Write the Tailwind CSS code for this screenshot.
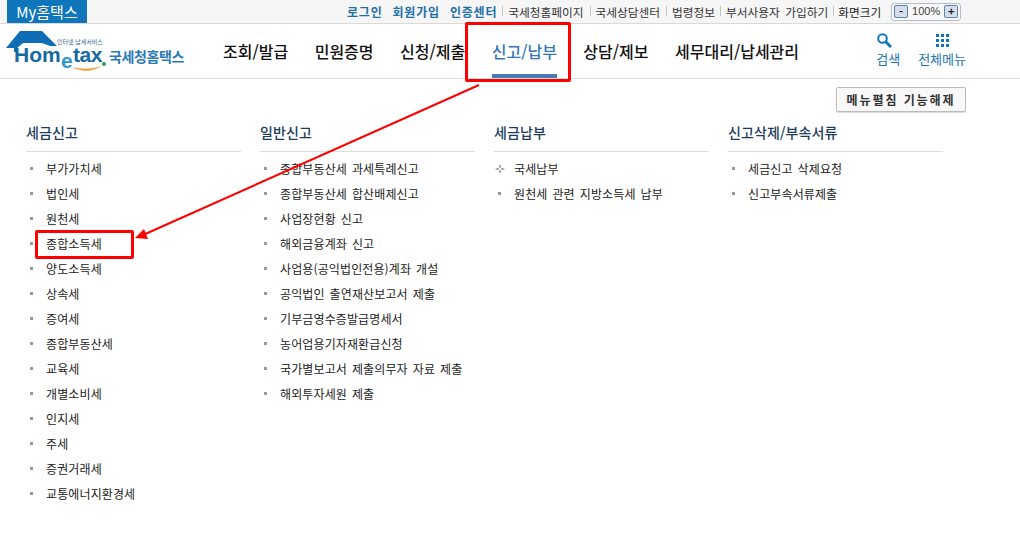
<!DOCTYPE html>
<html lang="ko">
<head>
  <meta charset="UTF-8" />
  <title>국세청 홈택스</title>
  <script src="https://cdn.jsdelivr.net/npm/@tailwindcss/browser@4"></script>
</head>
<body class="relative h-[534px] w-[1020px] overflow-hidden bg-white font-['Noto_Sans_CJK_KR','Noto_Sans',sans-serif] text-[12px] text-[#222]">

  <!-- top bar -->
  <div class="flex h-[24px] items-center border-b border-[#d9d9d9] bg-[#f6f6f6] pl-[7px]">
    <a class="flex h-[23px] w-[80px] items-center justify-center bg-[#0f76bb] text-[15px] leading-none text-white">My홈택스</a>
    <div class="ml-[260px] flex items-center gap-[10px] text-[12px] font-bold tracking-[.8px] text-[#1c6fa8]">
      <a>로그인</a><a>회원가입</a><a>인증센터</a>
    </div>
    <div class="ml-[5px] flex items-center text-[11.7px] text-[#333] [word-spacing:2px]">
      <span class="mr-[5px] h-[10px] w-px bg-[#c4c4c4]"></span><a>국세청홈페이지</a>
      <span class="ml-[6px] mr-[5px] h-[10px] w-px bg-[#c4c4c4]"></span><a>국세상담센터</a>
      <span class="ml-[6px] mr-[5px] h-[10px] w-px bg-[#c4c4c4]"></span><a>법령정보</a>
      <span class="ml-[5px] mr-[5px] h-[10px] w-px bg-[#c4c4c4]"></span><a>부서사용자 가입하기</a>
      <span class="ml-[5px] mr-[4px] h-[10px] w-px bg-[#c4c4c4]"></span><a class="text-[#222]">화면크기</a>
    </div>
    <div class="ml-[10px] flex h-[18px] w-[70px] items-center justify-between rounded-[3px] border border-[#b5bfcc] bg-[#f8f8f8] px-[2px]">
      <span class="flex h-[13px] w-[14px] items-center justify-center rounded-[2px] border border-[#5f82ad] bg-[#d5dfeb] text-[11px] font-bold leading-none text-[#223]">-</span>
      <span class="font-['Liberation_Sans',sans-serif] text-[11px] leading-none text-[#444]">100%</span>
      <span class="flex h-[13px] w-[14px] items-center justify-center rounded-[2px] border border-[#5f82ad] bg-[#d5dfeb] text-[11px] font-bold leading-none text-[#223]">+</span>
    </div>
  </div>

  <!-- header -->
  <header class="flex h-[55px] items-center border-b border-[#e0e0e0]">
    <div class="relative mt-[2px] h-[50px] w-[186px] shrink-0 self-start">
      <svg class="absolute left-0 top-0" width="110" height="50" viewBox="0 0 110 50">
        <path d="M6 22 L20 5 H42 L57 20 H50 L42 17 H23 L16 23 V26 H14 V22 Z" fill="#0f6db5"/>
        <path d="M72 41 Q87 49 102 40 Q87 45 72 41 Z" fill="#f0a030"/>
        <circle cx="104" cy="38" r="2" fill="#2ca04a"/>
      </svg>
      <span class="absolute left-[14px] top-[21px] font-['Liberation_Sans',sans-serif] text-[21px] font-bold leading-[16px] text-[#17699f]">Hom</span>
      <span class="absolute left-[61px] top-[27px] font-['Liberation_Sans',sans-serif] text-[21px] font-bold leading-[16px] text-[#2c97d0]">e</span>
      <span class="absolute left-[73px] top-[21px] font-['Liberation_Sans',sans-serif] text-[21px] font-bold leading-[16px] tracking-[-.4px] text-[#17699f]">tax</span>
      <span class="absolute left-[57px] top-[13px] text-[6px] leading-none text-[#3a6a9c]">인터넷 납세서비스</span>
      <span class="absolute left-[109px] top-[21px] text-[14px] font-bold leading-[18px] tracking-[-.4px] text-[#2a7ab5]">국세청홈택스</span>
    </div>
    <nav class="ml-[37px] flex h-full items-center gap-[26.500px] text-[16px] font-medium text-[#111]">
      <a>조회/발급</a>
      <a>민원증명</a>
      <a>신청/제출</a>
      <a class="relative flex h-full items-center text-[#3577b8]">
        신고/납부
        <span class="absolute bottom-0 left-0 h-[4px] w-full bg-[#4a7ab8]"></span>
      </a>
      <a>상담/제보</a>
      <a>세무대리/납세관리</a>
    </nav>
    <div class="ml-auto mr-[54px] -mt-[2px] flex gap-[18px] text-[13px] leading-[16px] text-[#1c74b4]">
      <a class="flex flex-col items-center gap-[3px]">
        <svg class="-ml-[8px]" width="15" height="15" viewBox="0 0 15 15" fill="none" stroke="#0f76bb" stroke-width="2">
          <circle cx="5.500" cy="5.500" r="4.300"/><path d="M8.500 8.500 L14 14" stroke-width="3"/>
        </svg>
        검색
      </a>
      <a class="flex flex-col items-center gap-[3px]">
        <span class="grid h-[15px] w-[13px] grid-cols-3 content-center gap-[2px]">
          <i class="h-[3px] w-[3px] bg-[#0f76bb]"></i><i class="h-[3px] w-[3px] bg-[#0f76bb]"></i><i class="h-[3px] w-[3px] bg-[#0f76bb]"></i>
          <i class="h-[3px] w-[3px] bg-[#0f76bb]"></i><i class="h-[3px] w-[3px] bg-[#0f76bb]"></i><i class="h-[3px] w-[3px] bg-[#0f76bb]"></i>
          <i class="h-[3px] w-[3px] bg-[#0f76bb]"></i><i class="h-[3px] w-[3px] bg-[#0f76bb]"></i><i class="h-[3px] w-[3px] bg-[#0f76bb]"></i>
        </span>
        전체메뉴
      </a>
    </div>
  </header>

  <!-- menu -->
  <div class="flex justify-end pr-[54px] pt-[8px]">
    <button class="h-[25px] w-[130px] rounded-[2px] border border-[#bbb] bg-[#f8f8f8] text-[12px] font-bold tracking-[1.9px] text-[#333] shadow-[0_1px_1px_#ddd]">메뉴펼침 기능해제</button>
  </div>

  <div class="ml-[26px] mt-[9px] grid w-[917px] grid-cols-[215px_215px_215px_215px] gap-x-[19px] tracking-[.12px] [word-spacing:1.5px]">
    <section>
      <h2 class="flex h-[31px] items-center border-b border-[#ddd] pb-[9px] text-[14px] font-medium leading-none text-[#1d3c5e]">세금신고</h2>
      <ul class="mt-[4px] [&>li]:flex [&>li]:h-[25px] [&>li]:items-center [&>li]:before:mr-[13px] [&>li]:before:ml-[4px] [&>li]:before:h-[3px] [&>li]:before:w-[3px] [&>li]:before:bg-[#999]">
        <li>부가가치세</li>
        <li>법인세</li>
        <li>원천세</li>
        <li>종합소득세</li>
        <li>양도소득세</li>
        <li>상속세</li>
        <li>증여세</li>
        <li>종합부동산세</li>
        <li>교육세</li>
        <li>개별소비세</li>
        <li>인지세</li>
        <li>주세</li>
        <li>증권거래세</li>
        <li>교통에너지환경세</li>
      </ul>
    </section>
    <section>
      <h2 class="flex h-[31px] items-center border-b border-[#ddd] pb-[9px] text-[14px] font-medium leading-none text-[#1d3c5e]">일반신고</h2>
      <ul class="mt-[4px] [&>li]:flex [&>li]:h-[25px] [&>li]:items-center [&>li]:before:mr-[13px] [&>li]:before:ml-[4px] [&>li]:before:h-[3px] [&>li]:before:w-[3px] [&>li]:before:bg-[#999]">
        <li>종합부동산세 과세특례신고</li>
        <li>종합부동산세 합산배제신고</li>
        <li>사업장현황 신고</li>
        <li>해외금융계좌 신고</li>
        <li>사업용(공익법인전용)계좌 개설</li>
        <li>공익법인 출연재산보고서 제출</li>
        <li>기부금영수증발급명세서</li>
        <li>농어업용기자재환급신청</li>
        <li>국가별보고서 제출의무자 자료 제출</li>
        <li>해외투자세원 제출</li>
      </ul>
    </section>
    <section>
      <h2 class="flex h-[31px] items-center border-b border-[#ddd] pb-[9px] text-[14px] font-medium leading-none text-[#1d3c5e]">세금납부</h2>
      <ul class="mt-[4px]">
        <li class="flex h-[25px] items-center">
          <svg class="ml-[1px] mr-[9px]" width="10" height="10" viewBox="0 0 10 10" fill="#888"><path d="M5 0 L6.200 3.500 H3.800 Z M5 10 L3.800 6.500 H6.200 Z M0 5 L3.500 3.800 V6.200 Z M10 5 L6.500 6.200 V3.800 Z"/></svg>
          국세납부
        </li>
        <li class="flex h-[25px] items-center before:mr-[13px] before:ml-[4px] before:h-[3px] before:w-[3px] before:bg-[#999]">원천세 관련 지방소득세 납부</li>
      </ul>
    </section>
    <section>
      <h2 class="flex h-[31px] items-center border-b border-[#ddd] pb-[9px] text-[14px] font-medium leading-none text-[#1d3c5e]">신고삭제/부속서류</h2>
      <ul class="mt-[4px] [&>li]:flex [&>li]:h-[25px] [&>li]:items-center [&>li]:before:mr-[13px] [&>li]:before:ml-[4px] [&>li]:before:h-[3px] [&>li]:before:w-[3px] [&>li]:before:bg-[#999]">
        <li>세금신고 삭제요청</li>
        <li>신고부속서류제출</li>
      </ul>
    </section>
  </div>

  <!-- red annotations over the page -->
  <div class="absolute left-[465px] top-[22px] h-[60px] w-[106px] rounded-[2px] border-[3px] border-[#f00]"></div>
  <div class="absolute left-[35px] top-[230px] h-[29px] w-[99px] rounded-[2px] border-[3px] border-[#f00]"></div>
  <svg class="absolute left-0 top-0" width="1020" height="534" viewBox="0 0 1020 534">
    <line x1="479" y1="85" x2="143" y2="235" stroke="#f00" stroke-width="2"/>
    <path d="M135 238 L144 229 L148 239 Z" fill="#f00"/>
  </svg>
</body>
</html>
